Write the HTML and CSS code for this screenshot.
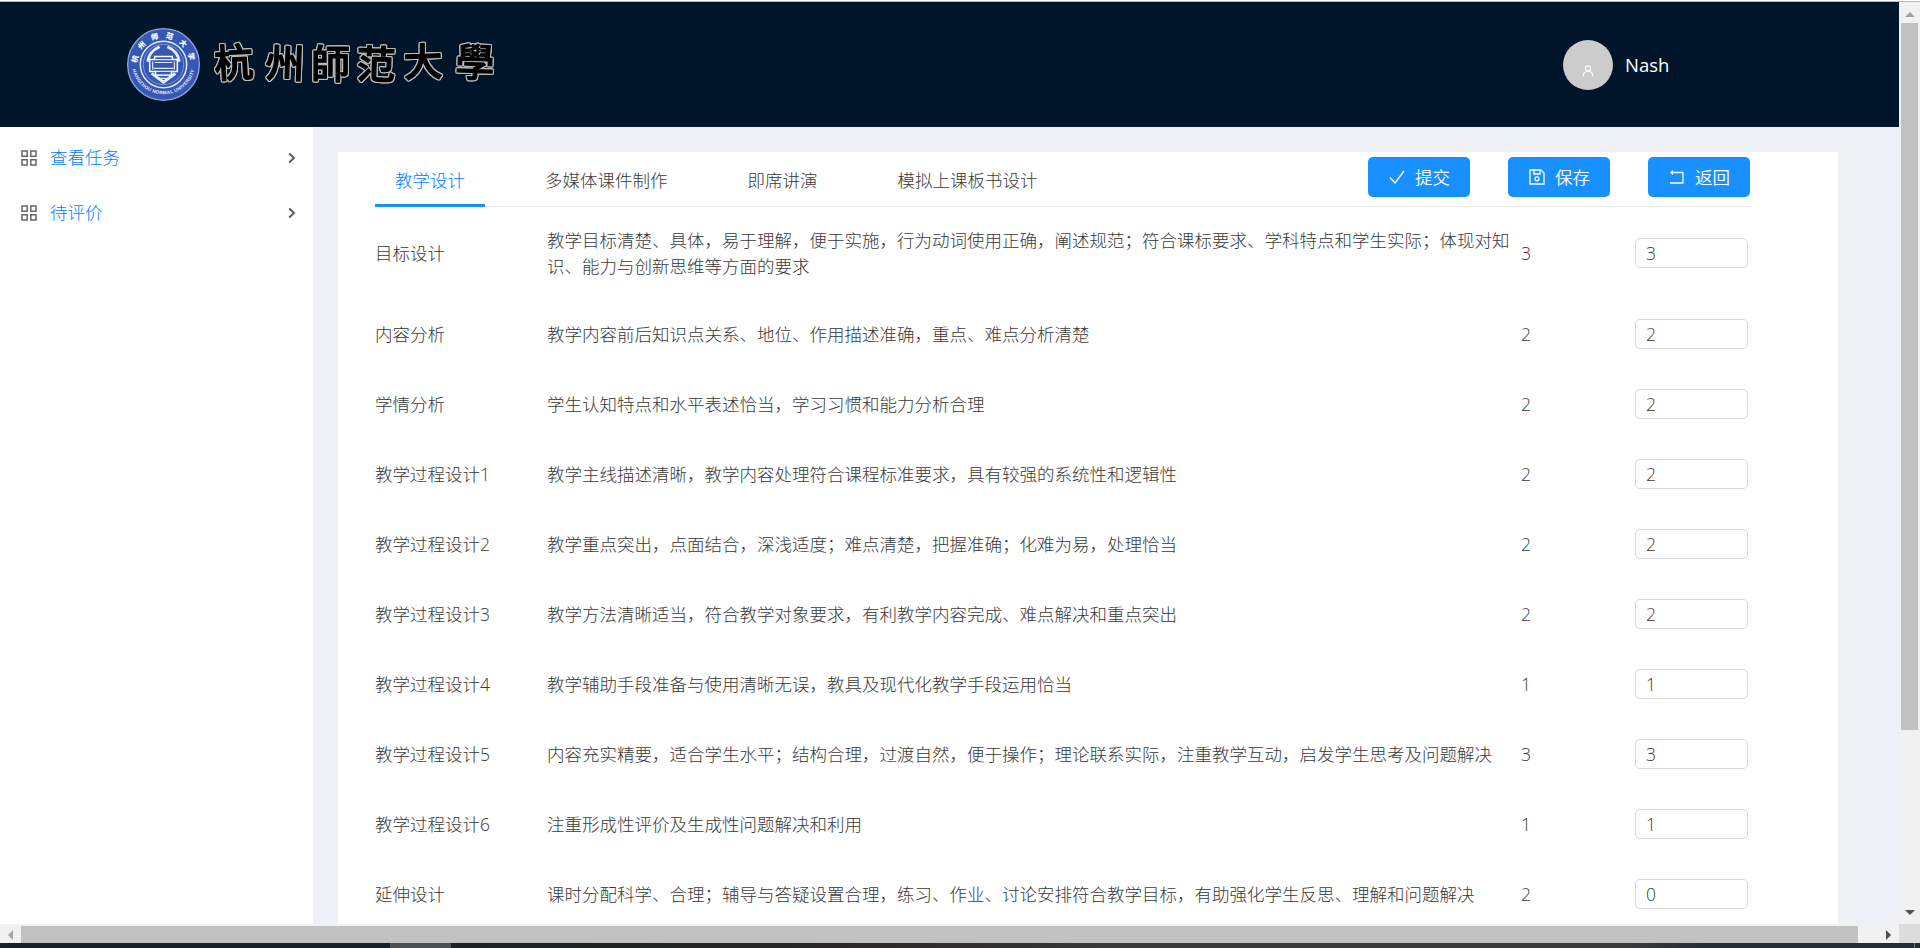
FILE: index.html
```html
<!DOCTYPE html>
<html lang="zh-CN">
<head>
<meta charset="utf-8">
<title>教学评价</title>
<link rel="stylesheet" href="styles.css">
</head>
<body>
<div class="screen">
  <div class="viewport">
    <div class="app">
      <header class="header">
        <div class="brand">
          <svg class="seal" viewBox="0 0 76 76">
            <defs>
              <path id="arc-top" d="M11.500 38a26.500 26.500 0 0 1 53 0"/>
              <path id="arc-bottom" d="M5.800 36a32.200 32.200 0 0 0 64.400 0"/>
            </defs>
            <circle cx="38" cy="38" r="36.300" fill="#3558b4" stroke="#8fa3dc" stroke-width="1.400"/>
            <circle cx="38" cy="38" r="23.500" fill="none" stroke="#e4eafa" stroke-width="1.500"/>
            <circle cx="38" cy="38" r="20.500" fill="none" stroke="#7e97d8" stroke-width="1"/>
            <text class="seal-cn"><textPath href="#arc-top" startOffset="52%" text-anchor="middle">杭州师范大学</textPath></text>
            <text class="seal-en"><textPath href="#arc-bottom" startOffset="50%" text-anchor="middle">HANGZHOU NORMAL UNIVERSITY</textPath></text>
            <path d="M34 20Q23 25 22 35M42 20Q53 25 54 35M26 47l12 9 12-9" fill="none" stroke="#e8edfb" stroke-width="3"/>
            <path d="M29 30h18v3h5v12h-6v4H30v-4h-6V33h5z" fill="#3558b4" stroke="#fff" stroke-width="1.500"/>
            <path d="M29 33h18M29 36h18M28 42h20M29 45h18M32 49h12M34 52h8M27 35v8M49 35v8" stroke="#dfe6fa" stroke-width="1.200"/>
          </svg>
          <svg class="wordmark" viewBox="0 0 285 56"><text y="42 41 42 42 41 40" x="2 52 98 143 191 242" rotate="-3 2 0 2 -2 2">杭州師范大學</text></svg>
        </div>
        <div class="user">
          <span class="avatar"><svg viewBox="0 0 12 12"><circle cx="6" cy="3.500" r="2.600"/><path d="M1 11.500Q1.500 6.500 6 6.300T11 11.500"/></svg></span>
          <span class="name">Nash</span>
        </div>
      </header>
      <div class="body">
        <nav class="side">
          <a class="side-item"><svg class="grid-icon" viewBox="0 0 16 16"><path d="M1 1h5.200v5.200H1zM9.800 1H15v5.200H9.800zM1 9.800h5.200V15H1zM9.800 9.800H15V15H9.800z"/></svg><span>查看任务</span><svg class="arrow" viewBox="0 0 8 12"><path d="M1.200 1.500L6 6 1.200 10.500"/></svg></a>
          <a class="side-item"><svg class="grid-icon" viewBox="0 0 16 16"><path d="M1 1h5.200v5.200H1zM9.800 1H15v5.200H9.800zM1 9.800h5.200V15H1zM9.800 9.800H15V15H9.800z"/></svg><span>待评价</span><svg class="arrow" viewBox="0 0 8 12"><path d="M1.200 1.500L6 6 1.200 10.500"/></svg></a>
        </nav>
        <main class="card">
          <div class="tabs">
            <div class="tab active">教学设计</div><div class="tab">多媒体课件制作</div><div class="tab">即席讲演</div><div class="tab">模拟上课板书设计</div>
            <div class="actions">
              <button class="btn"><svg viewBox="0 0 18 18"><path d="M2 9.500l5 5.500L16 3"/></svg>提交</button>
              <button class="btn"><svg viewBox="0 0 18 18"><path d="M2 2h11l3 3v11H2zM6 2v4h6V2"/><circle cx="9" cy="10.800" r="2"/></svg>保存</button>
              <button class="btn"><svg viewBox="0 0 18 18"><path d="M4 4.500h11v10.500H2"/><path class="solid" d="M2 4.500l3-2.400v4.800z"/></svg>返回</button>
            </div>
          </div>
          <div class="row first"><div>目标设计</div><div>教学目标清楚、具体，易于理解，便于实施，行为动词使用正确，阐述规范；符合课标要求、学科特点和学生实际；体现对知<br>识、能力与创新思维等方面的要求</div><div>3</div><input value="3"></div>
          <div class="row"><div>内容分析</div><div>教学内容前后知识点关系、地位、作用描述准确，重点、难点分析清楚</div><div>2</div><input value="2"></div>
          <div class="row"><div>学情分析</div><div>学生认知特点和水平表述恰当，学习习惯和能力分析合理</div><div>2</div><input value="2"></div>
          <div class="row"><div>教学过程设计1</div><div>教学主线描述清晰，教学内容处理符合课程标准要求，具有较强的系统性和逻辑性</div><div>2</div><input value="2"></div>
          <div class="row"><div>教学过程设计2</div><div>教学重点突出，点面结合，深浅适度；难点清楚，把握准确；化难为易，处理恰当</div><div>2</div><input value="2"></div>
          <div class="row"><div>教学过程设计3</div><div>教学方法清晰适当，符合教学对象要求，有利教学内容完成、难点解决和重点突出</div><div>2</div><input value="2"></div>
          <div class="row"><div>教学过程设计4</div><div>教学辅助手段准备与使用清晰无误，教具及现代化教学手段运用恰当</div><div>1</div><input value="1"></div>
          <div class="row"><div>教学过程设计5</div><div>内容充实精要，适合学生水平；结构合理，过渡自然，便于操作；理论联系实际，注重教学互动，启发学生思考及问题解决</div><div>3</div><input value="3"></div>
          <div class="row"><div>教学过程设计6</div><div>注重形成性评价及生成性问题解决和利用</div><div>1</div><input value="1"></div>
          <div class="row"><div>延伸设计</div><div>课时分配科学、合理；辅导与答疑设置合理，练习、作业、讨论安排符合教学目标，有助强化学生反思、理解和问题解决</div><div>2</div><input value="0"></div>
        </main>
      </div>
    </div>
    <div class="vbar"><i class="up"></i><b></b><i class="down"></i></div>
  </div>
  <div class="hbar"><i class="left"></i><b></b><i class="right"></i><span class="corner"></span></div>
  <div class="taskbar"><span class="task"></span><span class="task-rest"></span><span class="task-end"></span></div>
</div>
</body>
</html>
```
FILE: styles.css
```css
* { box-sizing: border-box; }
body {
  margin: 0;
  overflow: hidden;
  background: #fff;
  color: #383838;
  font: 300 17.5px/26.25px "Open Sans", "Noto Sans CJK SC", sans-serif;
}
.screen { height: 948px; padding-top: 1px; display: flex; flex-direction: column; }
.viewport { height: 923px; display: flex; border-top: 1px solid #b5b7b8; overflow: hidden; }
.app { width: 1899px; background: #f0f1f6; }
.header {
  height: 125px;
  padding: 0 231px 0 126px;
  display: flex;
  align-items: center;
  justify-content: space-between;
  background: #001529;
}
.brand { display: flex; align-items: center; gap: 12px; margin-top: -1px; }
.seal { width: 75px; height: 75px; display: block; }
.seal-cn { font: 900 7.5px "Noto Sans CJK SC", sans-serif; letter-spacing: 6.5px; fill: #fff; }
.seal-en { font: 700 4.8px "Liberation Sans", sans-serif; fill: #e8edfb; letter-spacing: 0.25px; }
.wordmark { width: 285px; height: 56px; overflow: visible; }
.wordmark text {
  font: 500 39px "Noto Sans CJK SC", sans-serif;
  fill: #000;
  stroke: #000;
  stroke-width: 1.2px;
  stroke-linejoin: round;
  filter: drop-shadow(1px 0 0 #bbb) drop-shadow(-1px 0 0 #bbb) drop-shadow(0 1px 0 #bbb) drop-shadow(0 -1px 0 #bbb);
}
.user { display: flex; align-items: center; gap: 12px; color: #fff; font-size: 18.5px; font-weight: 400; width: 105px; }
.name { padding-top: 2px; }
.avatar { flex: none; width: 50px; height: 50px; border-radius: 50%; background: #ccc; display: flex; justify-content: center; padding-top: 25px; }
.avatar svg { width: 12px; height: 12px; fill: none; stroke: #fff; stroke-width: 1.1; }
.body { height: 797px; display: flex; align-items: flex-start; }
.side { width: 313px; height: 100%; padding-top: 3px; background: #fff; }
.side-item { height: 55px; padding: 0 17px 0 21px; display: flex; align-items: center; color: #007cff; }
.side-item span { flex: 1; padding-left: 13px; }
.grid-icon { width: 16px; height: 16px; fill: none; stroke: #666; stroke-width: 1.5; }
.arrow { width: 8px; height: 12px; fill: none; stroke: #555; stroke-width: 1.8; }
.card { width: 1500px; height: 772px; margin: 25px 0 0 25px; padding: 0 88px 0 37px; background: #fff; }
.tabs { height: 55px; display: flex; border-bottom: 1px solid #e8e8e8; }
.tab { height: 55px; padding: 15px 20px 0; margin-right: 40px; }
.tab.active { color: #007cff; border-bottom: 3px solid #1890ff; }
.actions { margin-left: auto; padding-top: 5px; display: flex; gap: 38px; }
.btn {
  width: 102px; height: 40px; padding: 0;
  display: flex; align-items: center; justify-content: center; gap: 9px;
  border: 0; border-radius: 5px;
  background: #1890ff; color: #fff; font: inherit; font-weight: 350;
  box-shadow: 0 2px 1px rgba(0, 0, 0, .045);
}
.btn svg { width: 18px; height: 18px; fill: none; stroke: #fff; stroke-width: 1.3; }
.btn .solid { fill: #fff; stroke: none; }
.row { height: 70px; display: grid; grid-template-columns: 172px 974px 114px 113px; align-items: center; }
.row.first { height: 92px; }
.row input {
  width: 113px; height: 30px; padding: 0 10px;
  border: 1px solid #d9d9d9; border-radius: 5px;
  background: #fff; color: #383838; font: inherit;
}
.vbar { width: 21px; padding: 0 2px; display: flex; flex-direction: column; align-items: center; background: #f1f1f1; }
.vbar b { width: 17px; height: 707px; background: #c1c1c1; }
.hbar { height: 19px; display: flex; align-items: center; background: #f1f1f1; }
.hbar b { width: 1837px; height: 17px; margin-top: 2px; background: #c1c1c1; }
.corner { width: 21px; height: 19px; margin-left: auto; background: #dcdcdc; }
.up { margin: 10px 0 6px; border: 5px solid transparent; border-top: 0; border-bottom-color: #a3a3a3; }
.down { margin: auto 0 9px; border: 5px solid transparent; border-bottom: 0; border-top-color: #505050; }
.left { margin: 2px 8px 0; border: 5px solid transparent; border-left: 0; border-right-color: #a3a3a3; }
.right { margin: 2px 0 0 28px; border: 5px solid transparent; border-right: 0; border-left-color: #505050; }
.taskbar { height: 5px; display: flex; background: #15222b; }
.task { width: 61px; margin-left: 390px; background: #4a5256; }
.task-rest { flex: 1; background: linear-gradient(90deg, #1c2121, #2b2828 30%, #383838 45%, #3a3a3a 80%, #222b3a 86%); }
.task-end { width: 6px; border-left: 1px solid #777; background: #222b3a; }
```
